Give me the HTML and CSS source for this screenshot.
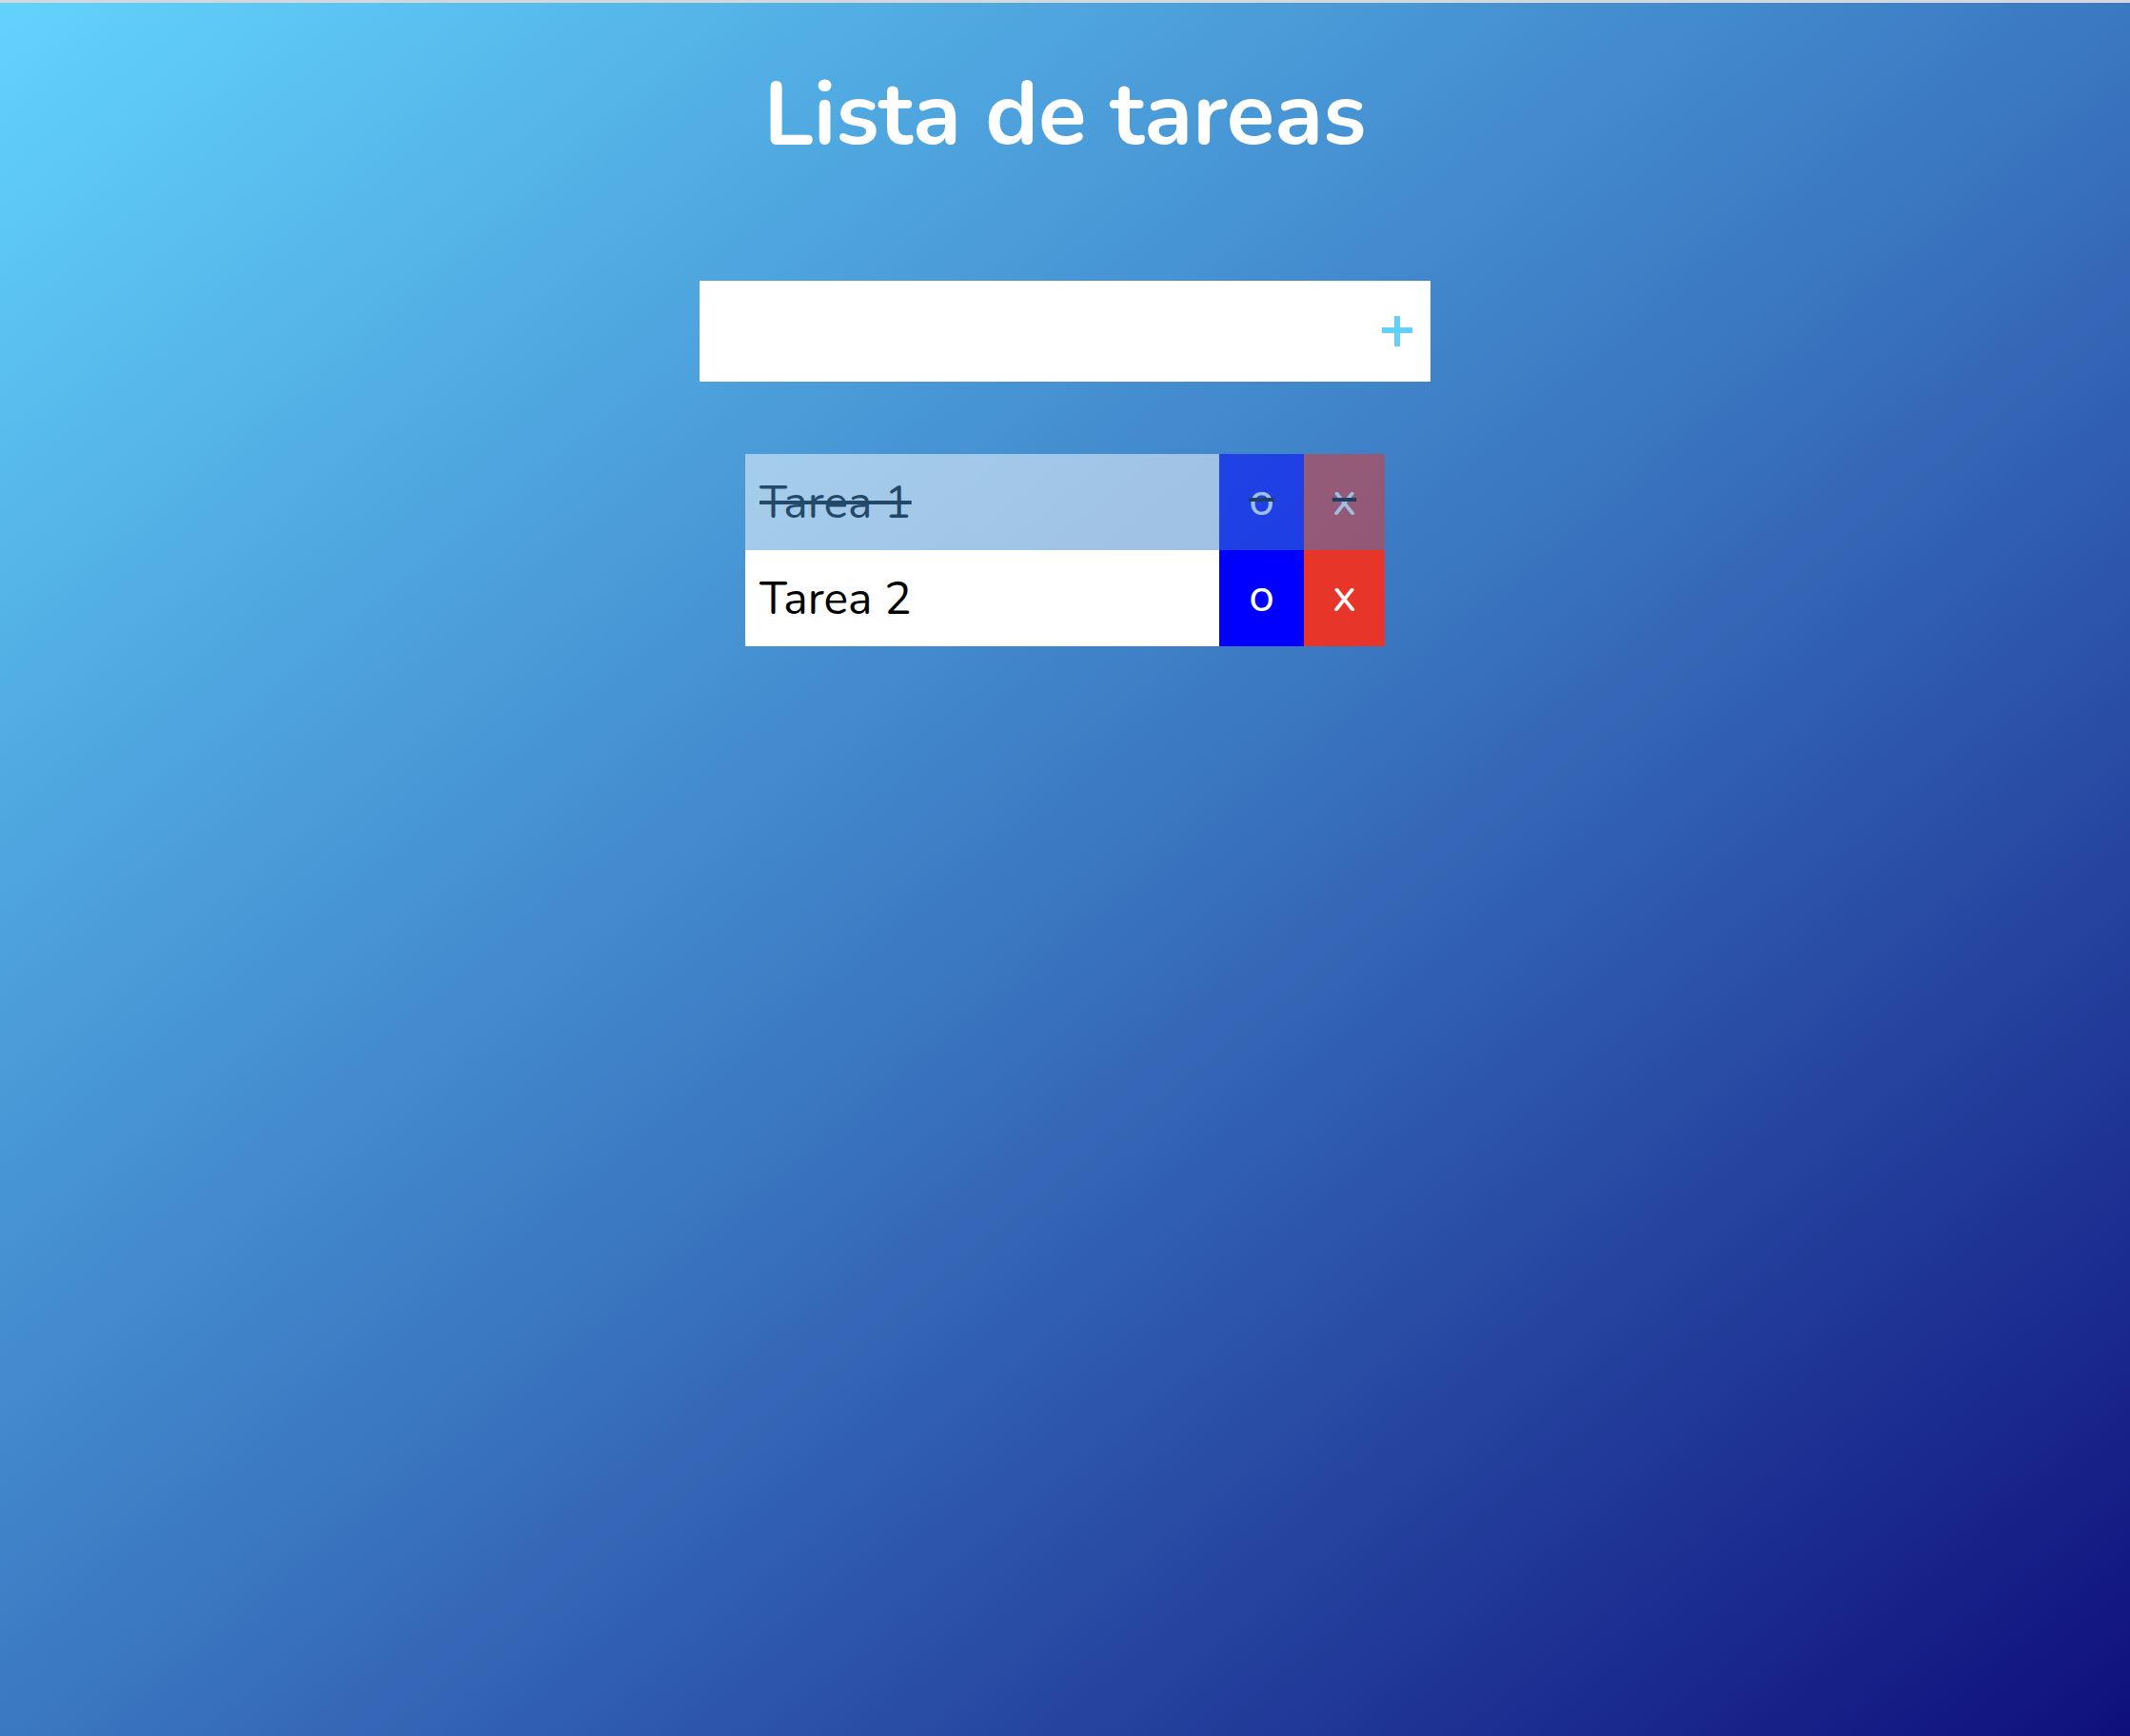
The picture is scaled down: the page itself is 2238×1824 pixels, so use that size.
FILE: index.html
```html
<!DOCTYPE html>
<html lang="es">
<head>
<meta charset="utf-8">
<title>Lista de tareas</title>
<link rel="stylesheet" href="styles.css">
</head>
<body>
<div class="topline"></div>
<main class="app">
  <h1 class="title">Lista de tareas</h1>
  <form class="add-form">
    <input class="add-input" type="text" aria-label="Nueva tarea">
    <button class="add-btn" type="button" aria-label="Añadir">
      <svg width="32" height="32" viewBox="0 0 32 32"><rect x="13" y="0" width="6" height="32" fill="#61d1fa"/><rect x="0" y="12" width="32" height="6" fill="#61d1fa"/></svg>
    </button>
  </form>
  <ul class="tasks">
    <li class="task done">
      <span class="task-text">Tarea 1</span>
      <button class="btn btn-o" type="button">o</button>
      <button class="btn btn-x" type="button">x</button>
    </li>
    <li class="task">
      <span class="task-text">Tarea 2</span>
      <button class="btn btn-o" type="button">o</button>
      <button class="btn btn-x" type="button">x</button>
    </li>
  </ul>
</main>
</body>
</html>
```
FILE: styles.css
```css
html, body {
  margin: 0;
  padding: 0;
}
body {
  min-height: 1824px;
  background: linear-gradient(to bottom right, #62d3fc 0%, #3b78c2 50%, #0f0f7c 100%);
  font-family: "Nunito", "Lato", "Noto Sans", sans-serif;
}
.topline {
  height: 3px;
  background: #d4d8da;
}
.app {
  display: flex;
  flex-direction: column;
  align-items: center;
}
.title {
  margin: 71px 0 0;
  font-size: 93px;
  line-height: 93px;
  font-weight: 700;
  color: #fff;
}
.add-form {
  margin-top: 128px;
  width: 768px;
  height: 106px;
  background: #fff;
  display: flex;
  align-items: center;
}
.add-input {
  flex: 1;
  height: 100%;
  border: none;
  outline: none;
  background: transparent;
  font-family: inherit;
  font-size: 40px;
  padding: 0 20px;
}
.add-btn {
  border: none;
  background: transparent;
  padding: 0;
  margin-right: 19px;
  width: 32px;
  height: 32px;
  display: flex;
}
.tasks {
  list-style: none;
  margin: 76px 0 0;
  padding: 0;
  width: 672px;
}
.task {
  display: flex;
  height: 101px;
  background: #fff;
  color: #000;
  font-size: 48px;
}
.task-text {
  flex: 1;
  display: flex;
  align-items: center;
  padding-left: 15px;
}
.btn {
  border: none;
  padding: 0 0 5px;
  margin: 0;
  font-family: inherit;
  font-size: 48px;
  color: #fff;
  display: flex;
  align-items: center;
  justify-content: center;
}
.btn-o {
  width: 89px;
  background: #0000ff;
}
.btn-x {
  width: 85px;
  background: #e8352a;
}
.task.done {
  opacity: 0.5;
}
.task.done .task-text,
.task.done .btn {
  text-decoration: line-through;
  text-decoration-color: #000;
  text-decoration-thickness: 4px;
}
```
